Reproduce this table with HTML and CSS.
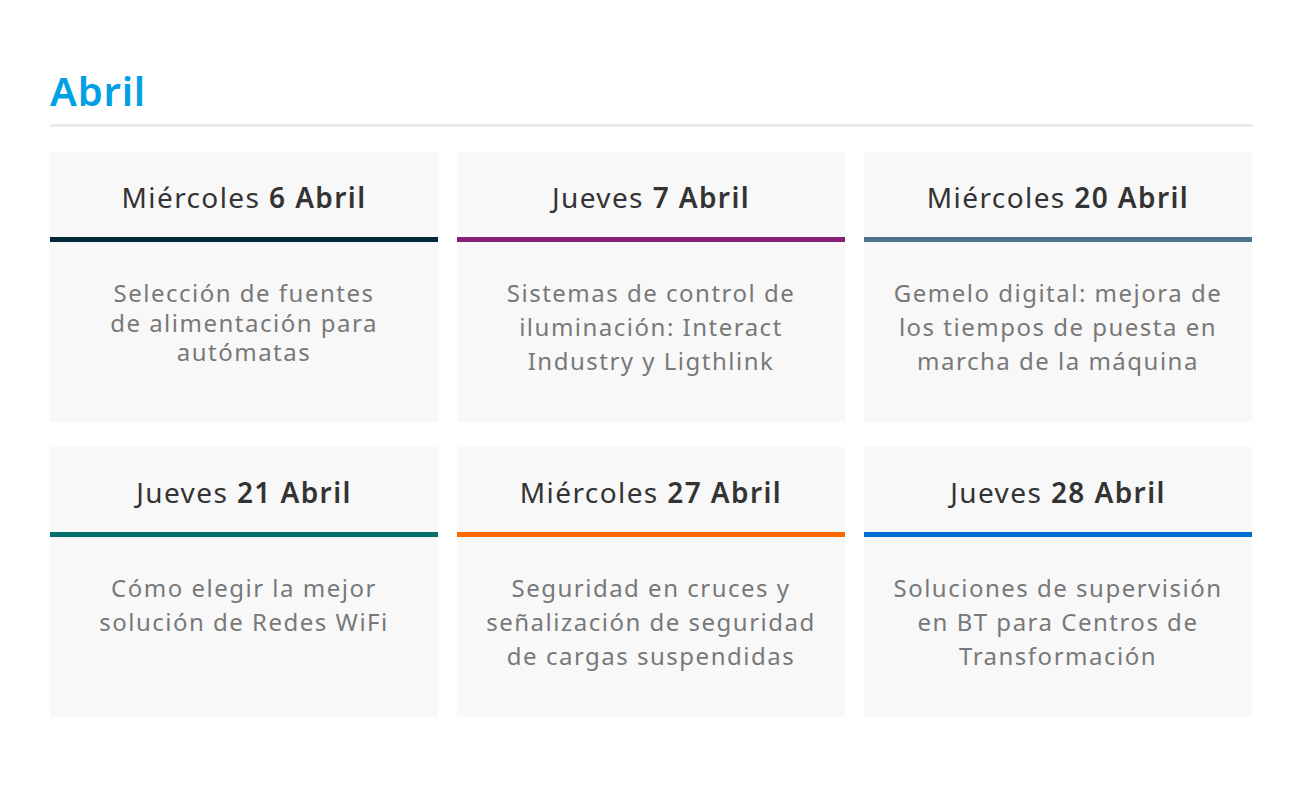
FILE: index.html
```html
<!DOCTYPE html>
<html lang="es">
<head>
<meta charset="utf-8">
<title>Abril</title>
<link rel="stylesheet" href="styles.css">
</head>
<body>
<main class="page">
  <h1 class="month">Abril</h1>
  <div class="rule"></div>
  <section class="grid">
    <article class="card">
      <header class="card-head">Miércoles <b>6 Abril</b></header>
      <div class="bar bar-navy"></div>
      <p class="card-body tight">Selección de fuentes<br>de alimentación para<br>autómatas</p>
    </article>
    <article class="card">
      <header class="card-head">Jueves <b>7 Abril</b></header>
      <div class="bar bar-purple"></div>
      <p class="card-body">Sistemas de control de<br>iluminación: Interact<br>Industry y Ligthlink</p>
    </article>
    <article class="card">
      <header class="card-head">Miércoles <b>20 Abril</b></header>
      <div class="bar bar-slate"></div>
      <p class="card-body">Gemelo digital: mejora de<br>los tiempos de puesta en<br>marcha de la máquina</p>
    </article>
    <article class="card">
      <header class="card-head">Jueves <b>21 Abril</b></header>
      <div class="bar bar-teal"></div>
      <p class="card-body">Cómo elegir la mejor<br>solución de Redes WiFi</p>
    </article>
    <article class="card">
      <header class="card-head">Miércoles <b>27 Abril</b></header>
      <div class="bar bar-orange"></div>
      <p class="card-body">Seguridad en cruces y<br>señalización de seguridad<br>de cargas suspendidas</p>
    </article>
    <article class="card">
      <header class="card-head">Jueves <b>28 Abril</b></header>
      <div class="bar bar-blue"></div>
      <p class="card-body">Soluciones de supervisión<br>en BT para Centros de<br>Transformación</p>
    </article>
  </section>
</main>
</body>
</html>
```
FILE: styles.css
```css
html, body {
  margin: 0;
  padding: 0;
  background: #ffffff;
}

body {
  font-family: "Noto Sans", "Liberation Sans", sans-serif;
}

.page {
  width: 1203px;
  padding: 71px 0 0 50px;
}

.month {
  margin: 0;
  font-size: 40px;
  line-height: 40px;
  font-weight: 600;
  color: #00a0e3;
  letter-spacing: 0.8px;
}

.rule {
  margin-top: 13px;
  height: 3px;
  background: #ebebeb;
}

.grid {
  margin-top: 25px;
  display: grid;
  grid-template-columns: repeat(3, 388px);
  column-gap: 19px;
  row-gap: 25px;
}

.card {
  height: 270px;
  background: #f8f8f8;
  display: flex;
  flex-direction: column;
}

.card-head {
  height: 85px;
  box-sizing: border-box;
  padding-top: 4px;
  display: flex;
  align-items: center;
  justify-content: center;
  font-size: 28px;
  color: #333333;
  letter-spacing: 1.4px;
  white-space: pre;
}

.card-head b {
  font-weight: 600;
}

.bar {
  height: 5px;
}

.bar-navy { background: #002b3b; }
.bar-purple { background: #851f78; }
.bar-slate { background: #4e7489; }
.bar-teal { background: #00716c; }
.bar-orange { background: #ff6a00; }
.bar-blue { background: #006fd3; }

.card-body {
  margin: 0;
  padding-top: 34px;
  text-align: center;
  font-size: 24px;
  line-height: 34px;
  color: #787878;
  letter-spacing: 1.5px;
}

.card-body.tight {
  padding-top: 36px;
  line-height: 29.5px;
}
```
